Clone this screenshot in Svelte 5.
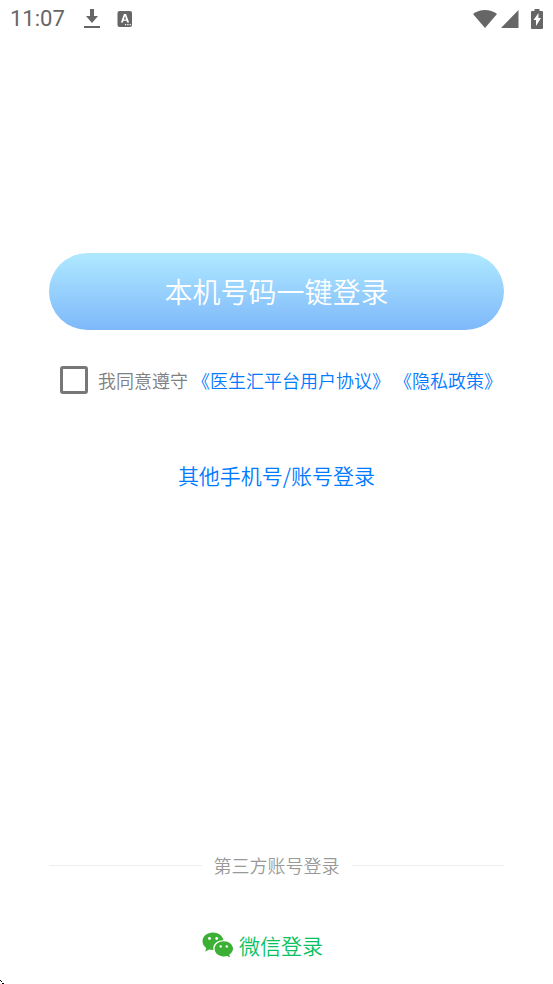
<script lang="ts">
  let agreed = $state(false);
</script>

<div class="screen">
  <header class="status-bar">
    <time>11:07</time>
    <svg class="download" width="16" height="22" viewBox="0 0 16 22" aria-hidden="true">
      <path d="M6 1h4v7h4l-6 7-6-7h4z" />
      <path d="M0 18h16v2H0z" />
    </svg>
    <svg width="16" height="18" viewBox="0 0 16 18" aria-hidden="true">
      <rect x="0.5" y="1" width="14.5" height="16" rx="2" />
      <path fill="#fff" fill-rule="evenodd" d="M6.9 4h2.2l3 8.500h-2l-.5-1.700H6.400L5.900 12.500h-2zM8 6l-1.100 3.400h2.200z" />
      <path fill="#fff" d="M8 14h1.200v1.200H8zM10.300 14h1.200v1.200h-1.200zM12.600 14h1.200v1.200h-1.200z" />
    </svg>
    <div class="signals">
      <svg width="24" height="20" viewBox="0 0 24 20" aria-hidden="true">
        <path d="M0 5C7-.5 17-.5 24 5L12 19z" />
      </svg>
      <svg class="cell" width="18" height="20" viewBox="0 0 18 20" aria-hidden="true">
        <path d="M17.500 1v18H0z" />
      </svg>
      <svg width="12" height="20" viewBox="0 0 12 20" aria-hidden="true">
        <path d="M3.500 0h5v2H11q1 0 1 1v16q0 1-1 1H1q-1 0-1-1V3q0-1 1-1h2.500z" />
        <path fill="#fff" d="M7.500 4v5H10L5 17v-6H2.500z" />
      </svg>
    </div>
  </header>

  <main>
    <button class="login" type="button">本机号码一键登录</button>

    <div class="agreement">
      <input id="agree" type="checkbox" bind:checked={agreed} />
      <label for="agree">我同意遵守</label>
      <a href="#terms">《医生汇平台用户协议》</a>
      <a href="#privacy">《隐私政策》</a>
    </div>

    <a class="other" href="#account">其他手机号/账号登录</a>
  </main>

  <footer>
    <div class="divider">第三方账号登录</div>
    <button class="wechat" type="button">
      <svg width="32" height="26" viewBox="0 0 32 26" aria-hidden="true">
        <path
          fill="#3cb035"
          d="M11 .5C5 .5.500 4.300.500 9.300c0 2.800 1.400 5.100 3.700 6.700L3.300 19.500l4-2c1.300.3 2.500.5 4.200.4C10.200 12.500 15 8 21.500 8.200 20.500 3.600 16.200.500 11 .500z"
        />
        <path
          fill="#3cb035"
          d="M21.800 9.200c-5.300 0-9.200 3.400-9.200 7.600 0 4.300 3.900 7.600 9.200 7.600 1.200 0 2.200-.2 3.200-.5l3.100 1.700-.9-2.900c2.300-1.500 3.800-3.500 3.800-5.900 0-4.200-4-7.600-9.200-7.600z"
        />
        <g fill="#fff">
          <circle cx="7.500" cy="6.500" r="1.400" />
          <circle cx="14.700" cy="6.500" r="1.400" />
          <circle cx="18.700" cy="14.400" r="1.200" />
          <circle cx="24.800" cy="14.400" r="1.200" />
        </g>
      </svg>
      微信登录
    </button>
  </footer>

  <svg class="corner" width="4" height="4" viewBox="0 0 4 4" aria-hidden="true">
    <path d="M0 0h1v1H0zM1 1h1v1H1zM2 3h2v1H2z" />
  </svg>
</div>

<style>
  :global(body) {
    margin: 0;
    background: #fff;
  }

  .screen {
    position: relative;
    display: flex;
    flex-direction: column;
    box-sizing: border-box;
    min-height: 100vh;
    padding-bottom: 23px;
    font-family: "Noto Sans CJK SC", sans-serif;
    font-weight: 350;
  }

  .status-bar {
    display: flex;
    align-items: center;
    height: 38px;
    padding: 0 10px;
    color: #666;
    font: 22px/38px Roboto, sans-serif;
  }
  .status-bar svg {
    fill: #666;
  }
  .download {
    margin: 0 17px 0 19px;
  }
  .signals {
    display: flex;
    align-items: center;
    margin-left: auto;
  }
  .cell {
    margin: 0 12px 0 4px;
  }

  main {
    display: flex;
    flex-direction: column;
    align-items: center;
    padding: 215px 49px 0;
  }

  button {
    border: 0;
    font-family: inherit;
    font-weight: inherit;
    cursor: pointer;
  }

  a {
    color: #007aff;
    text-decoration: none;
  }

  .login {
    width: 100%;
    height: 77px;
    padding: 0 0 2px;
    border-radius: 39px;
    color: #fff;
    background: linear-gradient(#afe9ff, #7eb8fa);
    font-size: 28px;
  }

  .agreement {
    display: flex;
    align-items: center;
    align-self: stretch;
    gap: 4px;
    margin-top: 36px;
    padding-left: 11px;
    color: #808080;
    font-size: 18px;
    line-height: 28px;
    white-space: nowrap;
  }
  .agreement input {
    appearance: none;
    flex: none;
    box-sizing: border-box;
    width: 28px;
    height: 28px;
    margin: 0 6px 0 0;
    border: 3px solid #777;
    border-radius: 3px;
  }
  .agreement input:checked {
    background: #007aff;
  }

  .other {
    margin-top: 65px;
    font-size: 21px;
    line-height: 32px;
  }

  footer {
    display: flex;
    flex-direction: column;
    margin-top: auto;
    padding: 0 49px;
  }

  .divider {
    display: flex;
    align-items: center;
    gap: 12px;
    color: #999;
    font-size: 18px;
    line-height: 28px;
  }
  .divider::before,
  .divider::after {
    content: "";
    flex: 1;
    height: 1px;
    background: #eee;
  }

  .wechat {
    display: flex;
    align-items: center;
    align-self: center;
    gap: 5px;
    margin: 50px 28px 0 0;
    padding: 0;
    color: #07c160;
    background: none;
    font-size: 21px;
    line-height: 32px;
  }

  .corner {
    position: absolute;
    bottom: 0;
    left: 0;
  }
</style>
